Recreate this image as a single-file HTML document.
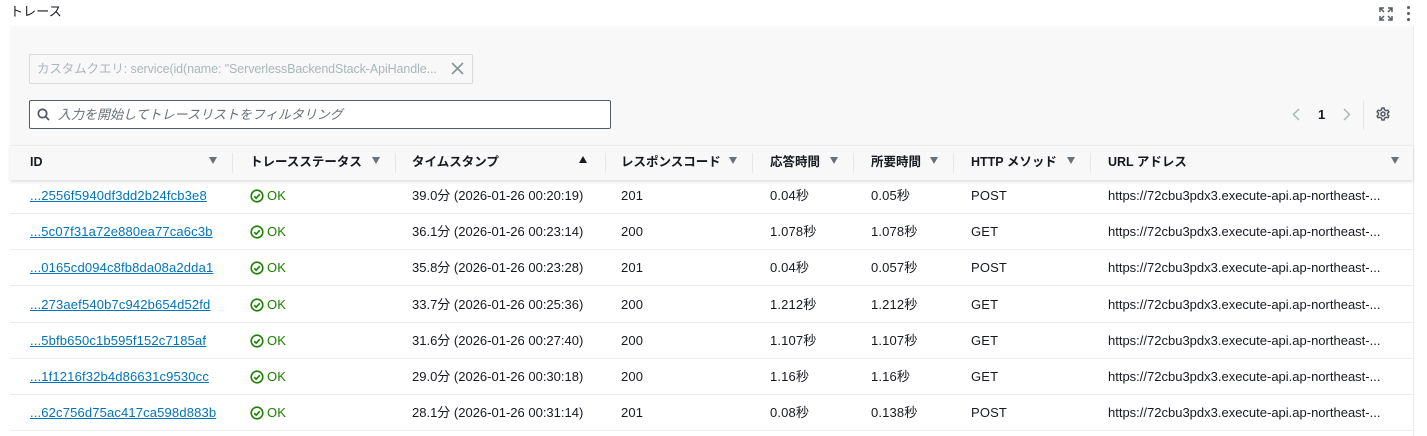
<!DOCTYPE html><html><head><meta charset="utf-8"><style>
*{box-sizing:border-box;margin:0;padding:0}
body{width:1427px;height:436px;background:#fff;font-family:"Liberation Sans","Noto Sans CJK JP",sans-serif;font-size:13px;letter-spacing:0.15px;color:#16191f;position:relative;overflow:hidden}
.a{position:absolute;white-space:nowrap;line-height:16px}
.panel{position:absolute;left:10px;top:26px;width:1403px;height:154px;background:#f8f8f9}
.hdr{position:absolute;left:10px;top:145px;width:1403px;height:35px;background:#f8f8f9;border-top:1px solid #eaeded;box-shadow:0 2px 3px rgba(0,0,0,.12)}
.th{font-weight:bold;top:154px;font-size:12.5px;letter-spacing:0}
.sep{position:absolute;top:153px;width:1px;height:20px;background:#e5e7ea}
.tri{position:absolute;top:157px;width:0;height:0;border-left:4px solid transparent;border-right:4px solid transparent;border-top:7px solid #687078}
.row{position:absolute;left:10px;width:1403px;height:1px;background:#eaeded}
a{color:#0073bb;text-decoration:underline}
.ok{color:#1d8102}
</style></head><body>
<div class="a" style="left:10px;top:4px;font-size:13px">トレース</div>
<svg class="a" style="left:1379px;top:7px" width="14" height="14" viewBox="0 0 14 14" fill="none" stroke="#545b64" stroke-width="1.5"><path d="M1 5V1h4M1 1l4 4M13 5V1H9M13 1L9 5M1 9v4h4M1 13l4-4M13 9v4H9M13 13l-4-4"/></svg>
<div class="a" style="left:1407px;top:6px;width:3px;height:16px"><div style="width:3px;height:3px;background:#545b64;border-radius:50%;margin-bottom:3px"></div><div style="width:3px;height:3px;background:#545b64;border-radius:50%;margin-bottom:3px"></div><div style="width:3px;height:3px;background:#545b64;border-radius:50%"></div></div>
<div class="a" style="left:1413px;top:26px;width:1px;height:410px;background:#eaeded"></div>
<div class="panel"></div>
<div class="a" style="left:29px;top:54px;width:444px;height:30px;border:1px solid #d5dbdb;background:#f8f8f9;border-radius:2px"></div>
<div class="a" style="left:37px;top:61px;color:#aab7b8;font-size:12.5px;letter-spacing:-0.1px">カスタムクエリ: service(id(name: "ServerlessBackendStack-ApiHandle...</div>
<svg class="a" style="left:451px;top:62px" width="13" height="13" viewBox="0 0 13 13" stroke="#879596" stroke-width="1.6"><path d="M1 1l11 11M12 1L1 12"/></svg>
<div class="a" style="left:29px;top:100px;width:582px;height:29px;border:1px solid #545b64;background:#fff;border-radius:2px"></div>
<svg class="a" style="left:37px;top:108px" width="13" height="13" viewBox="0 0 13 13" fill="none" stroke="#545b64" stroke-width="1.8"><circle cx="5.5" cy="5.5" r="4.2"/><path d="M8.5 8.5L12 12"/></svg>
<div class="a" style="left:58px;top:107px;color:#687078;font-style:italic;font-size:13px;letter-spacing:0">入力を開始してトレースリストをフィルタリング</div>
<svg class="a" style="left:1292px;top:108px" width="8" height="13" viewBox="0 0 8 13" fill="none" stroke="#aab7b8" stroke-width="1.5"><path d="M7 1L1.5 6.5 7 12"/></svg>
<div class="a" style="left:1318px;top:107px;font-weight:bold">1</div>
<svg class="a" style="left:1343px;top:108px" width="8" height="13" viewBox="0 0 8 13" fill="none" stroke="#aab7b8" stroke-width="1.5"><path d="M1 1l5.5 5.5L1 12"/></svg>
<div class="a" style="left:1363px;top:100px;width:1px;height:30px;background:#e5e7ea"></div>
<svg class="a" style="left:1376px;top:107px" width="14" height="14" viewBox="0 0 14 14" fill="none" stroke="#545b64" stroke-width="1.5"><circle cx="7" cy="7" r="2"/><path d="M6 1h2l.5 1.8 1.6.9 1.8-.5 1 1.7-1.3 1.3v1.6l1.3 1.3-1 1.7-1.8-.5-1.6.9L8 13H6l-.5-1.8-1.6-.9-1.8.5-1-1.7 1.3-1.3V6.2L1.1 4.9l1-1.7 1.8.5 1.6-.9z"/></svg>
<div class="hdr"></div>
<div class="a th" style="left:30px">ID</div><div class="tri" style="left:209px"></div><div class="sep" style="left:232px"></div>
<div class="a th" style="left:250px">トレースステータス</div><div class="tri" style="left:372px"></div><div class="sep" style="left:395px"></div>
<div class="a th" style="left:412px">タイムスタンプ</div><div class="a" style="left:579px;top:156px;width:0;height:0;border-left:4px solid transparent;border-right:4px solid transparent;border-bottom:7px solid #16191f"></div><div class="sep" style="left:605px"></div>
<div class="a th" style="left:621px">レスポンスコード</div><div class="tri" style="left:729px"></div><div class="sep" style="left:752px"></div>
<div class="a th" style="left:770px">応答時間</div><div class="tri" style="left:830px"></div><div class="sep" style="left:853px"></div>
<div class="a th" style="left:871px">所要時間</div><div class="tri" style="left:930px"></div><div class="sep" style="left:953px"></div>
<div class="a th" style="left:971px">HTTP メソッド</div><div class="tri" style="left:1067px"></div><div class="sep" style="left:1090px"></div>
<div class="a th" style="left:1108px">URL アドレス</div><div class="tri" style="left:1391px"></div>
<div id="rows"></div>
<script>
const d=[["...2556f5940df3dd2b24fcb3e8","39.0分 (2026-01-26 00:20:19)","201","0.04秒","0.05秒","POST"],
["...5c07f31a72e880ea77ca6c3b","36.1分 (2026-01-26 00:23:14)","200","1.078秒","1.078秒","GET"],
["...0165cd094c8fb8da08a2dda1","35.8分 (2026-01-26 00:23:28)","201","0.04秒","0.057秒","POST"],
["...273aef540b7c942b654d52fd","33.7分 (2026-01-26 00:25:36)","200","1.212秒","1.212秒","GET"],
["...5bfb650c1b595f152c7185af","31.6分 (2026-01-26 00:27:40)","200","1.107秒","1.107秒","GET"],
["...1f1216f32b4d86631c9530cc","29.0分 (2026-01-26 00:30:18)","200","1.16秒","1.16秒","GET"],
["...62c756d75ac417ca598d883b","28.1分 (2026-01-26 00:31:14)","201","0.08秒","0.138秒","POST"]];
let h="";d.forEach((r,i)=>{const y=188+i*36.2;
h+=`<div class="a" style="left:30px;top:${y}px"><a>${r[0]}</a></div>
<svg class="a" style="left:250px;top:${y+1}px" width="14" height="14" viewBox="0 0 14 14" fill="none" stroke="#1d8102" stroke-width="1.6"><circle cx="7" cy="7" r="5.8"/><path d="M4.2 7.2l2 2 3.6-4"/></svg>
<div class="a ok" style="left:267px;top:${y}px">OK</div>
<div class="a" style="left:412px;top:${y}px;letter-spacing:0">${r[1]}</div>
<div class="a" style="left:621px;top:${y}px">${r[2]}</div>
<div class="a" style="left:770px;top:${y}px">${r[3]}</div>
<div class="a" style="left:871px;top:${y}px">${r[4]}</div>
<div class="a" style="left:971px;top:${y}px">${r[5]}</div>
<div class="a" style="left:1108px;top:${y}px;letter-spacing:0">https://72cbu3pdx3.execute-api.ap-northeast-...</div>
<div class="row" style="top:${y+25}px"></div>`;});
document.getElementById("rows").innerHTML=h;
</script>
</body></html>
